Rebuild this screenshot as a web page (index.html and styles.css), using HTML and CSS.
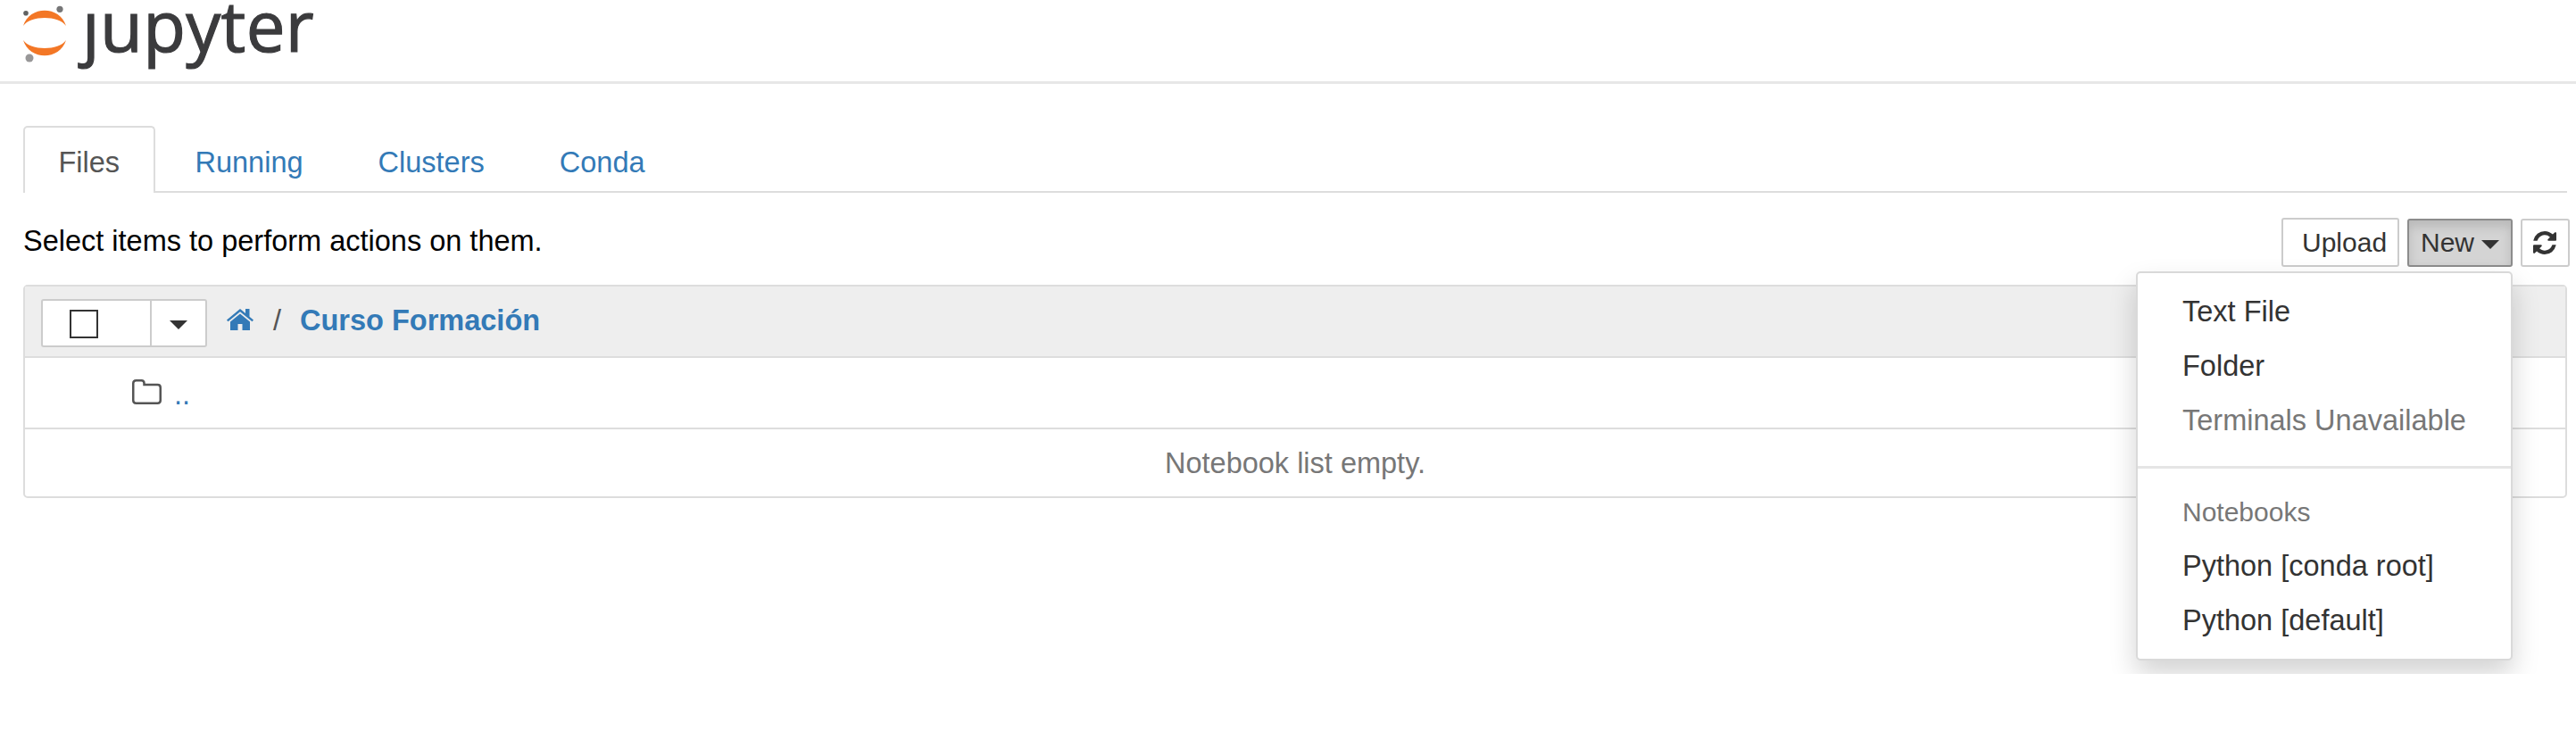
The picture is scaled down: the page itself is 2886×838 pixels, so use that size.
FILE: index.html
```html
<!DOCTYPE html>
<html lang="es">
<head>
<meta charset="utf-8">
<title>Jupyter</title>
<link rel="stylesheet" href="styles.css">
</head>
<body>
<div class="page">
  <header class="header">
    <svg class="planet" width="50" height="72" viewBox="0 0 50 72">
      <path fill="#f37726" d="M0 29C8 17 40 17 48 29C41 6 7 6 0 29Z"/>
      <path fill="#f37726" d="M0 45C8 57 40 57 48 45C41 68 7 68 0 45Z"/>
      <circle cx="3" cy="14.700" r="2.800" fill="#616262"/>
      <circle cx="41" cy="10.300" r="3.600" fill="#767677"/>
      <circle cx="7" cy="65" r="4.500" fill="#989798"/>
    </svg>
    <div class="wordmark">ȷupyter</div>
  </header>
  <nav class="tabs">
    <a class="tab active">Files</a>
    <a class="tab">Running</a>
    <a class="tab">Clusters</a>
    <a class="tab">Conda</a>
  </nav>
  <div class="toolbar">
    <div class="hint">Select items to perform actions on them.</div>
    <div class="buttons">
      <button class="btn upload">Upload</button>
      <div class="new-wrap">
        <button class="btn new">New<svg class="caret" width="20" height="10" viewBox="0 0 20 10"><path d="M0 0H20L10 10Z"/></svg></button>
        <div class="menu-clip">
          <ul class="menu">
            <li>Text File</li>
            <li>Folder</li>
            <li class="muted">Terminals Unavailable</li>
            <li class="divider"></li>
            <li class="heading">Notebooks</li>
            <li>Python [conda root]</li>
            <li>Python [default]</li>
          </ul>
        </div>
      </div>
      <button class="btn refresh"><svg width="26" height="26" viewBox="0 0 1536 1536"><path d="M1511 928q0 5-1 7-64 268-268 434.500T764 1536q-146 0-282.500-55T238 1324l-129 129q-19 19-45 19t-45-19-19-45V960q0-26 19-45t45-19h448q26 0 45 19t19 45-19 45l-137 137q71 66 161 102t187 36q134 0 250-65t186-179q11-17 53-117 8-23 30-23h192q13 0 22.500 9.500t9.500 22.500zm25-800v448q0 26-19 45t-45 19h-448q-26 0-45-19t-19-45 19-45l138-138Q969 256 768 256q-134 0-250 65T332 500q-11 17-53 117-8 23-30 23H50q-13 0-22.500-9.500T18 608v-7q65-268 270-434.500T768 0q146 0 284 55.500T1297 212l130-129q19-19 45-19t45 19 19 45z"/></svg></button>
    </div>
  </div>
  <main class="list">
    <div class="row head">
      <div class="select">
        <span class="check-cell"><span class="checkbox"></span></span>
        <span class="caret-cell"><svg class="caret" width="20" height="10" viewBox="0 0 20 10"><path d="M0 0H20L10 10Z"/></svg></span>
      </div>
      <svg class="home" width="30" height="24" viewBox="0 0 30 24"><path d="M15 5.500L4 14.500V24H12.500V17H17.500V24H26V14.500Z"/><path d="M15 0L0 12.500L1.500 14.300L15 3.200L28.500 14.300L30 12.500L25.500 8.700V0H21V5Z"/></svg>
      <span class="slash">/</span>
      <a class="crumb">Curso Formación</a>
    </div>
    <div class="row parent">
      <svg class="folder" width="33" height="28" viewBox="0 0 33 28"><path d="M1.250 4.500Q1.250 1.250 4.500 1.250H10.500Q13.500 1.250 13.500 4.500V6H28.500Q31.750 6 31.750 9.200V23.500Q31.750 26.700 28.500 26.700H4.500Q1.250 26.700 1.250 23.500Z"/></svg>
      <a class="dots">..</a>
    </div>
    <div class="row empty">Notebook list empty.</div>
  </main>
</div>
</body>
</html>
```
FILE: styles.css
```css
* { box-sizing: border-box; }
body {
  margin: 0;
  background: #fff;
  font: 32.5px/46px "Liberation Sans", Arial, sans-serif;
  color: #333;
}
.page { width: 2886px; height: 838px; overflow: hidden; }
.header {
  height: 94px;
  border-bottom: 3px solid #e7e7e7;
  display: flex;
  align-items: flex-start;
  padding-left: 26px;
}
.planet { flex: none; }
.wordmark {
  margin: 2px 0 0 16px;
  font: 78px/52px "Open Sans", "Noto Sans", sans-serif;
  letter-spacing: 0.3px;
  color: #3b3b3d;
  -webkit-text-stroke: 1.2px #3b3b3d;
}
.tabs {
  display: flex;
  margin: 47px 10px 0 26px;
  height: 75px;
  border-bottom: 2px solid #ddd;
}
.tab {
  height: 75px;
  padding: 15.500px 37.500px 0;
  border: 2px solid transparent;
  border-bottom: 0;
  border-radius: 5px 5px 0 0;
  margin-right: 5px;
  color: #337ab7;
}
.active { color: #555; background: #fff; border-color: #ddd; width: 148px; }
.toolbar {
  display: flex;
  justify-content: space-between;
  height: 103px;
  padding: 28px 7px 0 26px;
}
.hint { color: #000; padding-top: 3px; }
.buttons { display: flex; gap: 9px; align-items: flex-start; }
.btn {
  display: flex;
  align-items: center;
  height: 54px;
  margin: 1px 0 0;
  padding: 0;
  border: 2px solid #ccc;
  border-radius: 3px;
  background: #fff;
  font: 30px/44px "Liberation Sans", Arial, sans-serif;
  color: #333;
}
.upload { width: 132px; height: 55px; margin-top: 0; padding-left: 21px; }
.new {
  width: 118px;
  padding-left: 13px;
  border-color: #8c8c8c;
  background: #d4d4d4;
  box-shadow: inset 0 7px 12px rgba(0, 0, 0, 0.125);
}
.new .caret { margin: 4px 0 0 8px; }
.caret, .refresh svg { fill: #333; }
.refresh { width: 55px; padding-left: 12px; }
.new-wrap { position: relative; }
.menu-clip {
  position: absolute;
  z-index: 2;
  top: 45px;
  right: -60px;
  width: 530px;
  height: 466px;
  padding: 15px 60px 0 48px;
  overflow: hidden;
  pointer-events: none;
}
.menu {
  list-style: none;
  margin: 0;
  width: 422px;
  height: 436px;
  padding: 12px 0 0;
  background: #fff;
  border: 2px solid #d9d9d9;
  border-radius: 5px;
  box-shadow: 0 15px 30px rgba(0, 0, 0, 0.175);
}
.menu li { height: 61.200px; padding: 8px 0 0 50px; white-space: nowrap; }
.menu .muted { color: #777; }
.menu .divider { height: 3px; margin: 20.400px 0 20.600px; padding: 0; background: #e5e5e5; }
.menu .heading { height: 57.200px; padding-top: 5px; font-size: 30px; color: #777; }
.list {
  margin: 0 10px 0 26px;
  border: 2px solid #ddd;
  border-radius: 5px;
}
.row { display: flex; height: 80px; border-bottom: 2px solid #ddd; }
.head { background: #eee; padding: 14px 0 0 18px; }
.select {
  display: flex;
  width: 186px;
  height: 54px;
  border: 2px solid #ccc;
  border-radius: 3px;
  background: #fff;
}
.check-cell { width: 122px; padding: 10px 0 0 30px; border-right: 2px solid #ccc; }
.checkbox { display: block; width: 32px; height: 32px; border: 2px solid #333; }
.caret-cell { display: flex; padding: 22px 0 0 20px; }
.home { margin: 11px 0 0 22px; fill: #337ab7; }
.slash { margin: 1px 0 0 22px; color: #555; }
.crumb { margin: 1px 0 0 21px; font-weight: bold; color: #337ab7; }
.parent { padding: 24px 0 0 120px; }
.folder { fill: none; stroke: #555; stroke-width: 2.500px; }
.dots { margin-left: 14px; color: #337ab7; margin-top: -6px; }
.empty { height: 75px; border: 0; justify-content: center; padding-top: 15px; color: #777; }
```
